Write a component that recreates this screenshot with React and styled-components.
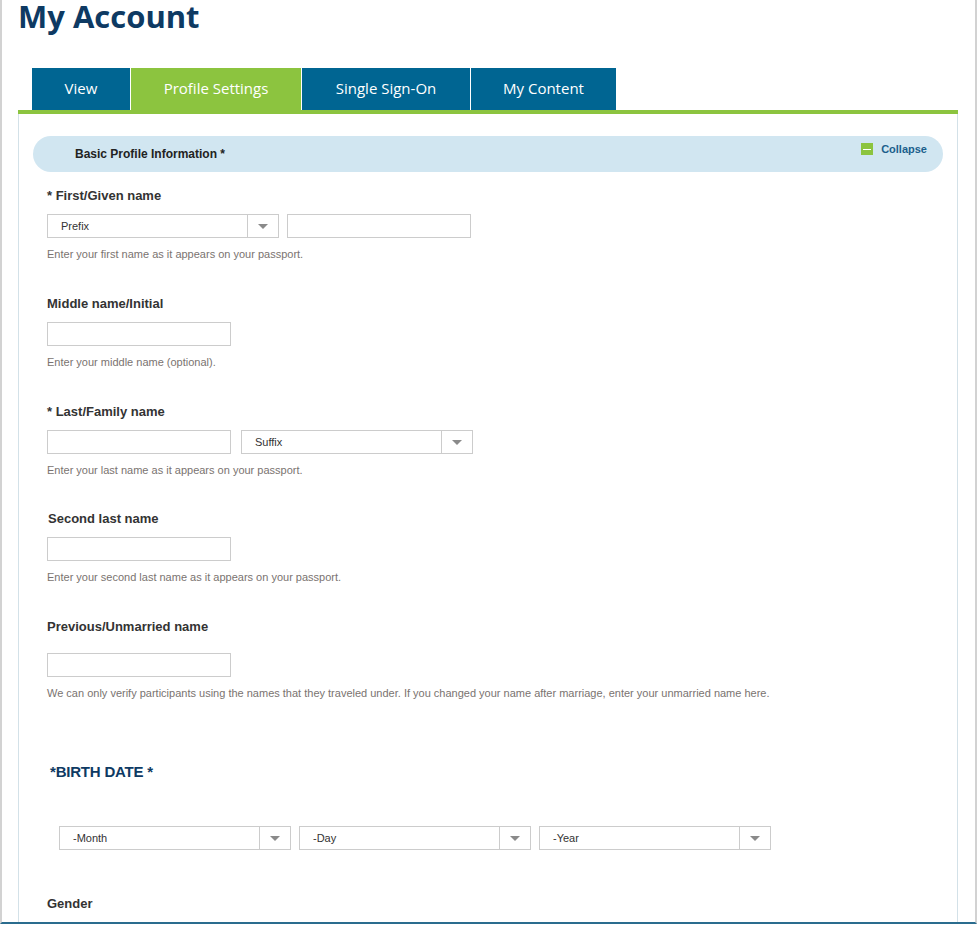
import React from 'react';
import styled, { createGlobalStyle } from 'styled-components';

const GlobalStyle = createGlobalStyle`
  body {
    margin: 0;
    background: #ffffff;
    font-family: "Liberation Sans", Arial, sans-serif;
  }
`;

const Page = styled.div`
  width: 977px;
  box-sizing: border-box;
  border-left: 2px solid #d2d2d2;
  border-right: 2px solid #d2d2d2;
  padding: 0 17px 0 16px;
  border-bottom: 2px solid #2a6c8e;
`;

const Title = styled.h1`
  margin: 0;
  font-family: "Open Sans", sans-serif;
  font-weight: 700;
  font-size: 31px;
  line-height: 33px;
  color: #0e3a63;
`;

const Tabs = styled.div`
  display: flex;
  gap: 1px;
  margin-top: 35px;
  padding-left: 14px;
  border-bottom: 4px solid #8cc43f;
`;

const Tab = styled.div`
  width: ${p => p.$w}px;
  height: 42px;
  box-sizing: border-box;
  padding-bottom: 3px;
  display: flex;
  align-items: center;
  justify-content: center;
  background: ${p => (p.$active ? '#8cc43f' : '#006592')};
  color: #ffffff;
  font-family: "Open Sans", sans-serif;
  font-size: 15px;
`;

const Panel = styled.div`
  border-left: 1px solid #d3e1e8;
  border-right: 1px solid #d3e1e8;
  padding: 22px 14px 10px 14px;
`;

const Band = styled.div`
  height: 36px;
  border-radius: 18px;
  background: #d1e6f1;
  display: flex;
  align-items: flex-start;
  justify-content: space-between;
  padding: 0 16px 0 42px;
`;

const BandTitle = styled.div`
  font-size: 12px;
  font-weight: 700;
  color: #222;
  margin-top: 11px;
`;

const Collapse = styled.div`
  display: flex;
  align-items: center;
  gap: 8px;
  margin-top: 7px;
  font-size: 11px;
  font-weight: 700;
  color: #1b5f8c;
`;

const MinusBox = styled.span`
  width: 12px;
  height: 12px;
  background: #8cc43f;
  display: flex;
  align-items: center;
  justify-content: center;

  &::after {
    content: '';
    width: 8px;
    height: 1px;
    background: #fff;
  }
`;

const Form = styled.div`
  padding: 16px 0 0 14px;
`;

const Field = styled.div`
  margin-bottom: ${p => p.$after || 35}px;
`;

const Label = styled.div`
  font-size: 13px;
  line-height: 16px;
  font-weight: 700;
  color: #333;
  margin-left: ${p => p.$shift || 0}px;
`;

const Row = styled.div`
  display: flex;
  gap: ${p => p.$gap || 8}px;
  margin-top: ${p => p.$top || 10}px;
  padding-left: ${p => p.$indent || 0}px;
`;

const Input = styled.div`
  width: 184px;
  height: 24px;
  box-sizing: border-box;
  border: 1px solid #cccccc;
  background: #fff;
`;

const SelectBox = styled.div`
  width: 232px;
  height: 24px;
  box-sizing: border-box;
  border: 1px solid #cccccc;
  display: flex;
  background: #fff;
`;

const SelectText = styled.div`
  flex: 1;
  font-size: 11px;
  line-height: 22px;
  color: #333;
  padding-left: 13px;
`;

const Arrow = styled.div`
  width: 30px;
  border-left: 1px solid #cccccc;
  display: flex;
  align-items: center;
  justify-content: center;

  &::after {
    content: '';
    border-left: 5px solid transparent;
    border-right: 5px solid transparent;
    border-top: 5px solid #8a8a8a;
  }
`;

const Help = styled.div`
  font-size: 11px;
  line-height: 14px;
  color: #7a7370;
  margin-top: 9px;
`;

const Section = styled.div`
  font-size: 15px;
  line-height: 18px;
  color: #0e3a63;
  font-weight: 700;
  margin: 63px 0 0 3px;
  letter-spacing: -0.2px;
`;

const GenderLabel = styled(Label)`
  margin-top: 46px;
`;

const Select = ({ text }) => (
  <SelectBox>
    <SelectText>{text}</SelectText>
    <Arrow />
  </SelectBox>
);

export default function App() {
  return (
    <>
      <GlobalStyle />
      <Page>
        <Title>My Account</Title>
        <Tabs>
          <Tab $w={98}>View</Tab>
          <Tab $w={170} $active>Profile Settings</Tab>
          <Tab $w={168}>Single Sign-On</Tab>
          <Tab $w={145}>My Content</Tab>
        </Tabs>
        <Panel>
          <Band>
            <BandTitle>Basic Profile Information *</BandTitle>
            <Collapse>
              <MinusBox />
              Collapse
            </Collapse>
          </Band>
          <Form>
            <Field>
              <Label>* First/Given name</Label>
              <Row>
                <Select text="Prefix" />
                <Input />
              </Row>
              <Help>Enter your first name as it appears on your passport.</Help>
            </Field>
            <Field>
              <Label>Middle name/Initial</Label>
              <Row>
                <Input />
              </Row>
              <Help>Enter your middle name (optional).</Help>
            </Field>
            <Field $after={34}>
              <Label>* Last/Family name</Label>
              <Row $gap={10}>
                <Input />
                <Select text="Suffix" />
              </Row>
              <Help>Enter your last name as it appears on your passport.</Help>
            </Field>
            <Field>
              <Label $shift={1}>Second last name</Label>
              <Row>
                <Input />
              </Row>
              <Help>Enter your second last name as it appears on your passport.</Help>
            </Field>
            <Field>
              <Label>Previous/Unmarried name</Label>
              <Row $top={18}>
                <Input />
              </Row>
              <Help>
                We can only verify participants using the names that they traveled under. If you changed your name after marriage, enter your unmarried name here.
              </Help>
            </Field>
            <Section>*BIRTH DATE *</Section>
            <Row $top={45} $indent={12}>
              <Select text="-Month" />
              <Select text="-Day" />
              <Select text="-Year" />
            </Row>
            <GenderLabel>Gender</GenderLabel>
          </Form>
        </Panel>
      </Page>
    </>
  );
}
